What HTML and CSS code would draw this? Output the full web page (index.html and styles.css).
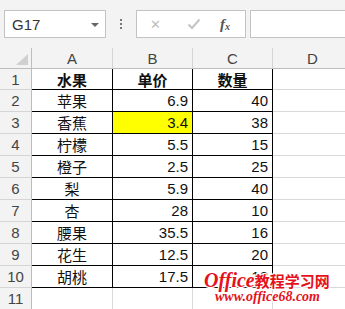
FILE: index.html
```html
<!DOCTYPE html>
<html>
<head>
<meta charset="utf-8">
<link rel="stylesheet" href="styles.css">
</head>
<body>
<div class="app">
  <div class="toolbar">
    <div class="namebox">
      <span class="ref">G17</span>
      <span class="caret"></span>
    </div>
    <div class="dots"><i></i><i></i><i></i></div>
    <div class="fbtns">
      <span class="btn cancel">✕</span>
      <svg class="btn check" width="14" height="12" viewBox="0 0 14 12"><path d="M1.5 6.5 L5 10 L12.5 1.5" fill="none" stroke="#c4c4c4" stroke-width="2"/></svg>
      <span class="btn fx"><i>f</i><sub>x</sub></span>
    </div>
    <div class="finput"></div>
  </div>
  <div class="sheet">
    <div class="ch corner"><span class="tri"></span></div>
    <div class="ch">A</div>
    <div class="ch">B</div>
    <div class="ch">C</div>
    <div class="ch">D</div>

    <div class="rh r1">1</div>
    <div class="c t r1 ctr b">水果</div>
    <div class="c t r1 ctr b">单价</div>
    <div class="c t r1 ctr b">数量</div>
    <div class="c g r1"></div>

    <div class="rh">2</div>
    <div class="c t ctr">苹果</div>
    <div class="c t num">6.9</div>
    <div class="c t num">40</div>
    <div class="c g"></div>

    <div class="rh">3</div>
    <div class="c t ctr">香蕉</div>
    <div class="c t num hl">3.4</div>
    <div class="c t num">38</div>
    <div class="c g"></div>

    <div class="rh">4</div>
    <div class="c t ctr">柠檬</div>
    <div class="c t num">5.5</div>
    <div class="c t num">15</div>
    <div class="c g"></div>

    <div class="rh">5</div>
    <div class="c t ctr">橙子</div>
    <div class="c t num">2.5</div>
    <div class="c t num">25</div>
    <div class="c g"></div>

    <div class="rh">6</div>
    <div class="c t ctr">梨</div>
    <div class="c t num">5.9</div>
    <div class="c t num">40</div>
    <div class="c g"></div>

    <div class="rh">7</div>
    <div class="c t ctr">杏</div>
    <div class="c t num">28</div>
    <div class="c t num">10</div>
    <div class="c g"></div>

    <div class="rh">8</div>
    <div class="c t ctr">腰果</div>
    <div class="c t num">35.5</div>
    <div class="c t num">16</div>
    <div class="c g"></div>

    <div class="rh">9</div>
    <div class="c t ctr">花生</div>
    <div class="c t num">12.5</div>
    <div class="c t num">20</div>
    <div class="c g"></div>

    <div class="rh">10</div>
    <div class="c t ctr">胡桃</div>
    <div class="c t num">17.5</div>
    <div class="c t num">18</div>
    <div class="c g"></div>

    <div class="rh">11</div>
    <div class="c g"></div>
    <div class="c g"></div>
    <div class="c g"></div>
    <div class="c g"></div>
  </div>
  <div class="watermark">
    <div class="wm1"><span class="en">Office</span><span class="zh">教程学习网</span></div>
    <div class="wm2">www.office68.com</div>
  </div>
</div>
</body>
</html>
```
FILE: styles.css
```css
html, body {
  margin: 0;
  padding: 0;
  background: #ffffff;
}
.app {
  position: relative;
  width: 345px;
  height: 309px;
  overflow: hidden;
  font-family: "Liberation Sans", "Noto Sans CJK SC", sans-serif;
}
.toolbar {
  height: 48px;
  background: #f3f3f3;
  display: flex;
  align-items: flex-start;
  padding-top: 10px;
  box-sizing: border-box;
}
.namebox {
  margin-left: 4px;
  width: 102px;
  height: 28px;
  box-sizing: border-box;
  border: 1px solid #c3c3c3;
  background: #fff;
  display: flex;
  align-items: center;
  justify-content: space-between;
  padding: 0 6px 0 7px;
}
.ref {
  font-size: 15px;
  color: #333;
}
.caret {
  width: 0;
  height: 0;
  border-left: 4px solid transparent;
  border-right: 4px solid transparent;
  border-top: 4px solid #666;
  margin-top: 1px;
}
.dots {
  width: 30px;
  height: 28px;
  display: flex;
  flex-direction: column;
  align-items: center;
  justify-content: center;
  gap: 2px;
}
.dots i {
  width: 2px;
  height: 2px;
  background: #777;
}
.fbtns {
  width: 110px;
  height: 28px;
  box-sizing: border-box;
  border: 1px solid #c3c3c3;
  background: #fff;
  display: flex;
  align-items: center;
  padding-left: 13px;
}
.btn {
  display: block;
}
.cancel {
  font-size: 13px;
  color: #bdbdbd;
  width: 20px;
}
.check {
  margin-left: 17px;
}
.fx {
  margin-left: 19px;
  font-family: "Liberation Serif", serif;
  font-size: 15px;
  color: #555;
  font-weight: bold;
}
.fx sub {
  font-size: 10px;
  font-style: italic;
  vertical-align: -1px;
}
.finput {
  margin-left: 4px;
  flex: 1;
  height: 28px;
  box-sizing: border-box;
  border: 1px solid #c3c3c3;
  border-right: none;
  background: #fff;
}
.sheet {
  display: grid;
  grid-template-columns: 32px 81px 80px 80px 80px;
  grid-template-rows: 21px 21px repeat(10, 22px);
}
.ch {
  background: #f3f3f3;
  border-right: 1px solid #d5d5d5;
  border-bottom: 1px solid #bdbdbd;
  color: #444;
  font-size: 15px;
  display: flex;
  align-items: center;
  justify-content: center;
  box-sizing: border-box;
}
.corner {
  position: relative;
  border-right: 1px solid #bdbdbd;
}
.tri {
  position: absolute;
  right: 3px;
  bottom: 3px;
  width: 0;
  height: 0;
  border-left: 12px solid transparent;
  border-bottom: 11px solid #d0d0d0;
}
.rh {
  background: #f3f3f3;
  border-right: 1px solid #bdbdbd;
  border-bottom: 1px solid #d5d5d5;
  color: #444;
  font-size: 15px;
  display: flex;
  align-items: center;
  justify-content: center;
  box-sizing: border-box;
}
.c {
  box-sizing: border-box;
  border-right: 1px solid #d9d9d9;
  border-bottom: 1px solid #d9d9d9;
  font-size: 15px;
  color: #111;
  display: flex;
  align-items: center;
  padding: 0 4px;
}
.c.t {
  border-right-color: #000;
  border-bottom-color: #000;
}
.ctr {
  justify-content: center;
  font-family: "Noto Sans CJK SC", sans-serif;
  font-size: 15px;
}
.b {
  font-weight: bold;
}
.num {
  justify-content: flex-end;
}
.hl {
  background: #ffff00;
}
.watermark {
  position: absolute;
  left: 204px;
  top: 270px;
  color: #e5121b;
  font-weight: bold;
  text-shadow: 1px 1px 0 #fff, -1px -1px 0 #fff, 1px -1px 0 #fff, -1px 1px 0 #fff, 0 0 3px #fff;
  line-height: 1;
}
.wm1 {
  display: flex;
  align-items: baseline;
  white-space: nowrap;
}
.en {
  font-family: "Liberation Serif", serif;
  font-style: italic;
  font-size: 20px;
}
.zh {
  font-family: "Noto Sans CJK SC", sans-serif;
  font-size: 15px;
  letter-spacing: 0px;
}
.wm2 {
  margin-left: 11px;
  margin-top: 0px;
  font-family: "Liberation Serif", serif;
  font-style: italic;
  font-size: 14px;
  white-space: nowrap;
}
```
